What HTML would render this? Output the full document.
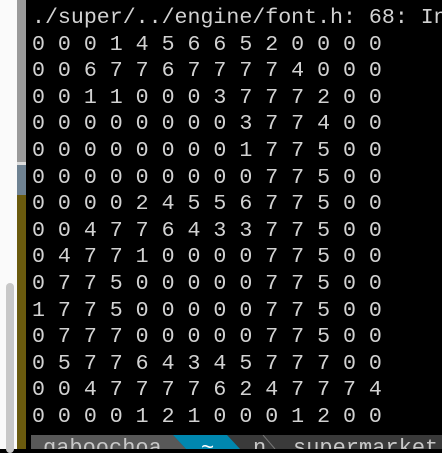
<!DOCTYPE html><html><head><style>
body{margin:0;width:442px;height:449px;overflow:hidden;background:#000;position:relative;font-family:"Liberation Mono",monospace}
.w{position:absolute;left:0;top:0;width:17px;height:449px;background:#fafafa}
.th{position:absolute;left:6px;top:283px;width:8px;height:170px;background:#c8c8c8;border-radius:4px}
.c1{position:absolute;left:17px;top:0;width:9px;height:162px;background:#9a9a9a}
.c2{position:absolute;left:17px;top:162px;width:9px;height:3px;background:#ddd}
.c3{position:absolute;left:17px;top:165px;width:9px;height:30px;background:#6f8292}
.c4{position:absolute;left:17px;top:195px;width:9px;height:254px;background:#6a5a0e}
pre{position:absolute;left:32px;top:5px;margin:0;font-size:21.6px;line-height:26.6px;color:#d2d2d2;font-family:"Liberation Mono",monospace}
.bar{position:absolute;left:31px;top:435px;width:411px;height:14px;background:#3a3a3a;font-size:22px;color:#c8c8c8;overflow:hidden}
.bar span{position:absolute;top:-1px;line-height:30px}
</style></head><body>
<div class="w"></div><div class="th"></div>
<div class="c1"></div><div class="c2"></div><div class="c3"></div><div class="c4"></div>
<pre>./super/../engine/font.h: 68: In
0 0 0 1 4 5 6 6 5 2 0 0 0 0
0 0 6 7 7 6 7 7 7 7 4 0 0 0
0 0 1 1 0 0 0 3 7 7 7 2 0 0
0 0 0 0 0 0 0 0 3 7 7 4 0 0
0 0 0 0 0 0 0 0 1 7 7 5 0 0
0 0 0 0 0 0 0 0 0 7 7 5 0 0
0 0 0 0 2 4 5 5 6 7 7 5 0 0
0 0 4 7 7 6 4 3 3 7 7 5 0 0
0 4 7 7 1 0 0 0 0 7 7 5 0 0
0 7 7 5 0 0 0 0 0 7 7 5 0 0
1 7 7 5 0 0 0 0 0 7 7 5 0 0
0 7 7 7 0 0 0 0 0 7 7 5 0 0
0 5 7 7 6 4 3 4 5 7 7 7 0 0
0 0 4 7 7 7 7 6 2 4 7 7 7 4
0 0 0 0 1 2 1 0 0 0 1 2 0 0</pre>
<div class="bar">
<svg width="411" height="14" style="position:absolute;left:0;top:0"><polygon points="0,0 142,0 155,14 0,14" fill="#585858"/><polygon points="142,0 196,0 209,14 155,14" fill="#0087af"/><polyline points="232,0 244,14" stroke="#777" fill="none"/></svg>
<span style="left:12px">gaboochoa</span><span style="left:170px;color:#fff">~</span><span style="left:222px">n</span><span style="left:262px">supermarket</span>
</div>
</body></html>
